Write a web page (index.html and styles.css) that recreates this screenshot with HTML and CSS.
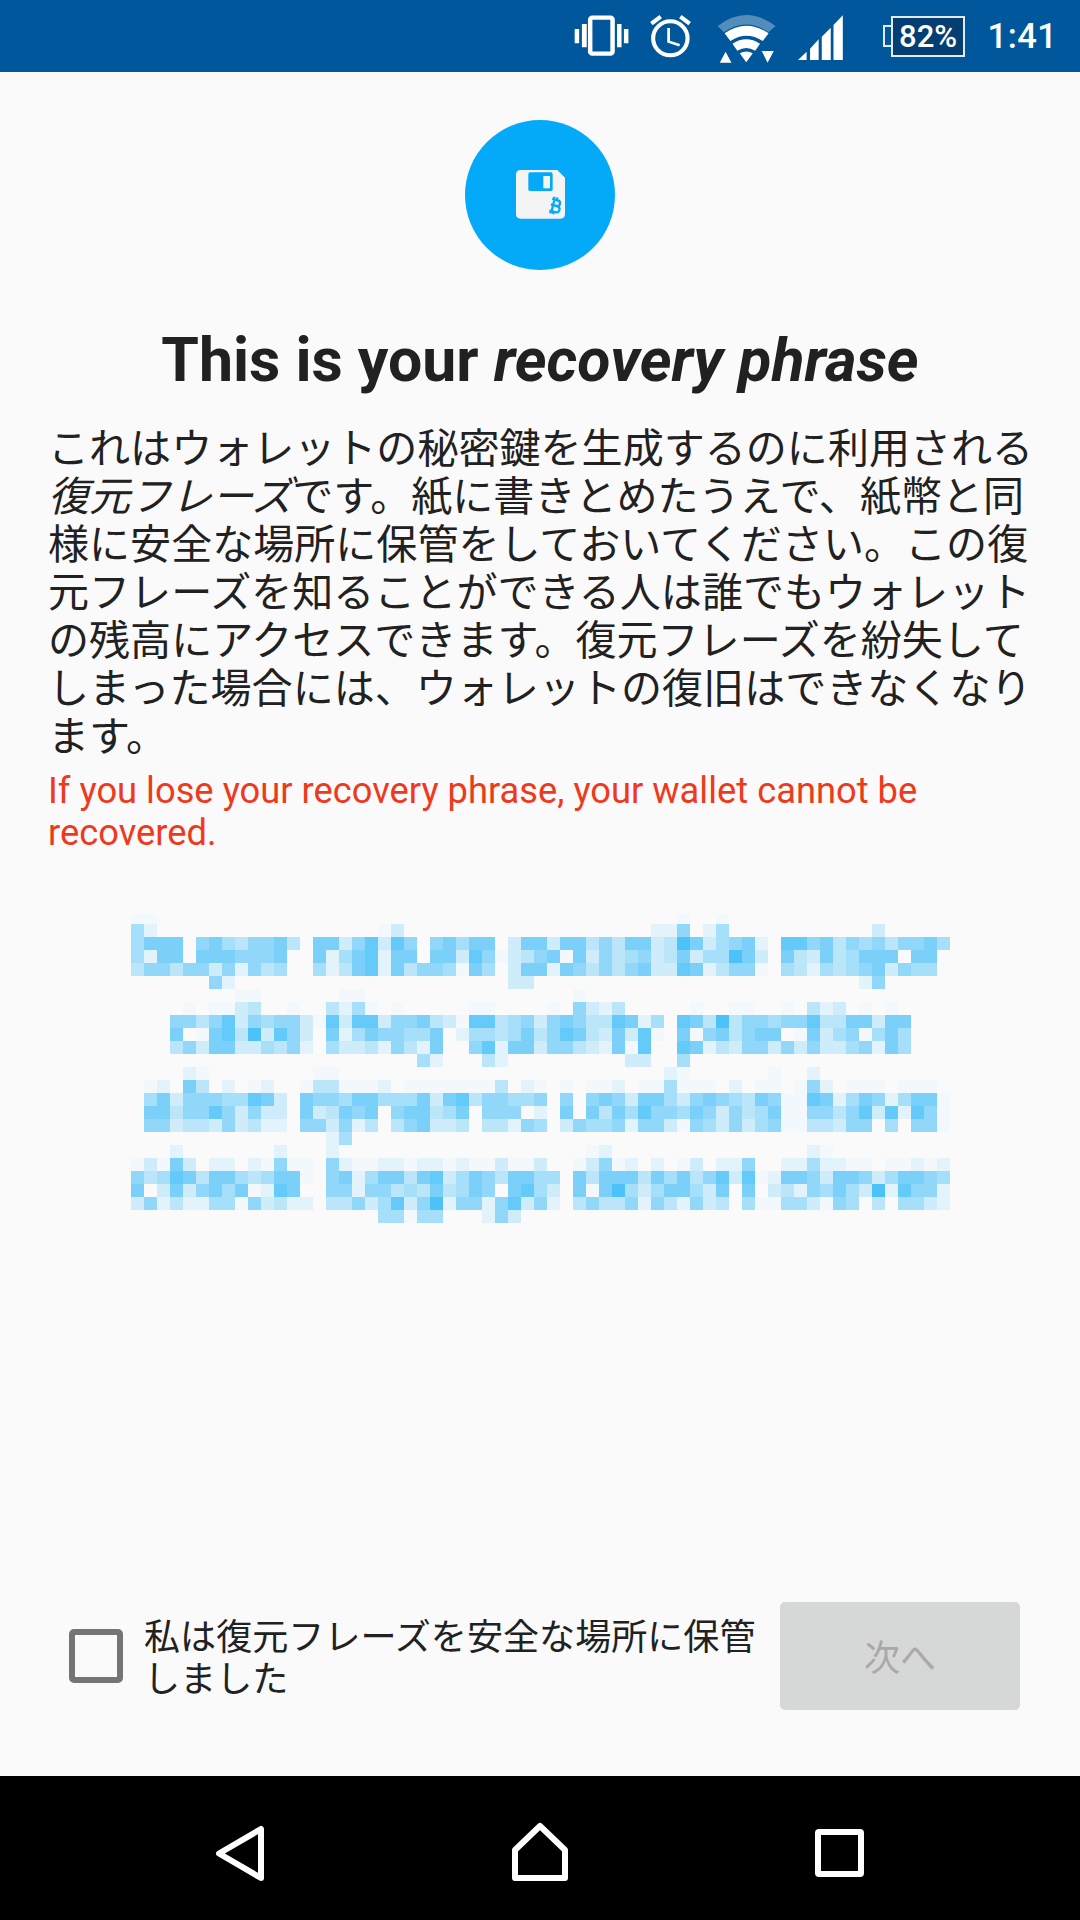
FILE: index.html
```html
<!DOCTYPE html>
<html lang="ja">
<head>
<meta charset="utf-8">
<title>Recovery phrase</title>
<link rel="stylesheet" href="styles.css">
</head>
<body>
<div class="screen">
  <header class="status">
    <svg class="ic-vibrate" viewBox="100 0 160 216" preserveAspectRatio="none"><path class="w" d="M102 87h13v43h-13zM123 72h14v70h-14zM225 72h13v70h-13zM245 87h13v43h-13z"/><rect class="outline" x="147" y="53" width="65" height="108" rx="6" stroke-width="13"/></svg>
    <svg class="ic-alarm" viewBox="316 0 126 216" preserveAspectRatio="none"><ellipse class="outline" cx="378" cy="115" rx="50" ry="51" stroke-width="12"/><path class="outline" stroke-width="12" d="M323 71 350 50M434 71 407 50"/><path class="outline" stroke-width="8" d="M373 84V125L405 136"/></svg>
    <svg class="ic-wifi" viewBox="515 0 170 216" preserveAspectRatio="none"><path class="w faded" d="M517 78Q600 12 685 78L665 97Q600 50 535 97Z"/><path class="w" d="M537 100Q600 55 665 100L648 123Q600 92 554 123ZM560 131Q600 105 640 131L626 152Q600 136 574 152ZM581 160Q600 149 619 160L600 187ZM523 188H557L540 155ZM645 153H680L662 188Z"/></svg>
    <svg class="ic-signal" viewBox="750 0 130 216" preserveAspectRatio="none"><path class="w" d="M750 180 775 155V180ZM785 146 810 118V180H785ZM819 110 845 83V180H819ZM853 75 880 46V180H853Z"/></svg>
    <div class="battery"><span class="batt-cap"></span><span class="batt-body">82%</span></div>
    <span class="clock">1:41</span>
  </header>

  <main class="content">
    <svg class="badge" viewBox="75 60 450 450">
      <circle class="badge-bg" cx="300" cy="285" r="225"/>
      <path class="disk" d="M242 210H352L375 233V342Q375 356 361 356H242Q228 356 228 342V224Q228 210 242 210Z"/>
      <rect class="badge-bg" x="265" y="217" width="73" height="56" rx="5"/>
      <rect class="disk" x="310" y="228" width="20" height="37"/>
      <g transform="rotate(14 343 317)">
        <path class="coin" d="M332 299H348Q358 299 358 308T348 316H332M348 316Q361 316 361 326T348 335H332M339 299V335M337 291V299M346 291V299M337 335V343M346 335V343"/>
      </g>
    </svg>

    <h1 class="title">This is your <em>recovery phrase</em></h1>

    <p class="intro">これはウォレットの秘密鍵を生成するのに利用される<br><em>復元フレーズ</em>です。紙に書きとめたうえで、紙幣と同<br>様に安全な場所に保管をしておいてください。この復<br>元フレーズを知ることができる人は誰でもウォレット<br>の残高にアクセスできます。復元フレーズを紛失して<br>しまった場合には、ウォレットの復旧はできなくなり<br>ます。</p>
    <p class="warning">If you lose your recovery phrase, your wallet cannot be recovered.</p>

    <div class="mosaic" id="mosaic"></div>

    <footer class="confirm">
      <span class="checkbox"></span>
      <span class="confirm-text">私は復元フレーズを安全な場所に保管しました</span>
      <span class="next">次へ</span>
    </footer>
  </main>

  <nav class="nav">
    <svg class="nav-back" viewBox="214 1822 52 62"><path d="M261 1829V1878L219 1853.5Z"/></svg>
    <svg class="nav-home" viewBox="511 1822 58 62"><path d="M515 1878H565V1850L540 1826 515 1850Z"/></svg>
    <svg class="nav-recent" viewBox="815 1822 52 62"><rect x="819" y="1832" width="43" height="42" rx="1"/></svg>
  </nav>
</div>
<script src="mosaic.js"></script>
</body>
</html>
```
FILE: styles.css
```css
* { box-sizing: border-box; }
html, body { margin: 0; padding: 0; }
body { width: 1080px; height: 1920px; overflow: hidden; font-family: Roboto, "Noto Sans CJK JP", sans-serif; background: #fafafa; }
.screen { display: flex; flex-direction: column; width: 1080px; height: 1920px; }

.status { flex: 0 0 72px; height: 72px; background: #01579b; display: flex; align-items: center; color: #fff; padding-left: 574.4px; }
.status svg { display: block; height: 72px; flex: none; }
.w { fill: #fff; }
.faded { fill-opacity: .32; }
.outline { fill: none; stroke: #fff; }
.ic-vibrate { width: 55.1px; }
.ic-alarm { width: 43.4px; margin-left: 19.3px; }
.ic-wifi { width: 58.5px; margin-left: 25.2px; }
.ic-signal { width: 44.8px; margin-left: 22.4px; }
.battery { display: flex; align-items: center; margin-left: 40.3px; height: 41px; }
.batt-cap { display: block; width: 8px; height: 22px; border: 2px solid #e3eaf1; border-right: 0; }
.batt-body { display: flex; align-items: center; justify-content: center; width: 73.5px; height: 41px; background: #043e73; border: 2px solid #e3eaf1; font: 500 31px/1 Roboto, sans-serif; }
.clock { margin-left: 22.7px; font: 500 34.5px/1 Roboto, sans-serif; letter-spacing: .5px; }

.content { flex: 1 1 auto; display: flex; flex-direction: column; padding: 48px 48px 66px; min-height: 0; }
.badge { display: block; flex: none; width: 150px; height: 150px; margin: 0 auto; }
.badge-bg { fill: #04a9f8; }
.disk { fill: #f4f4f4; }
.coin { fill: none; stroke: #04a9f8; stroke-width: 7; }
.title { margin: 55px 0 0; font: 700 60.8px/72px Roboto, sans-serif; color: #212121; text-align: center; white-space: nowrap; }
.title em { font-style: italic; }
.intro { margin: 24px 0 0; font: 400 41.05px/48px "Noto Sans CJK JP", sans-serif; color: #212121; white-space: nowrap; }
.intro em { font-style: italic; }
.warning { margin: 13px 0 0; font: 400 36.3px/42px Roboto, "Noto Sans CJK JP", sans-serif; color: #ee3a1c; }

.mosaic { display: grid; grid-template-columns: repeat(63, 13px); grid-template-rows: 10px repeat(23, 13px); width: 819px; margin: 60px auto 0; flex: none; }
.m0 { background: transparent; }
.m1 { background: #f2f8fc; }
.m2 { background: #e3f3fb; }
.m3 { background: #cfecfa; }
.m4 { background: #bbe5f9; }
.m5 { background: #a6dff9; }
.m6 { background: #90d7f9; }
.m7 { background: #7bd0f9; }
.m8 { background: #63caf9; }
.m9 { background: #4cc2f8; }

.confirm { margin-top: auto; display: flex; align-items: center; padding-left: 21px; margin-right: 12px; }
.checkbox { flex: none; width: 54px; height: 54px; border: 6px solid #757575; border-radius: 5px; }
.confirm-text { flex: none; width: 616px; margin-left: 21px; padding-bottom: 3px; font: 400 36.1px/42px "Noto Sans CJK JP", sans-serif; color: #212121; }
.next { flex: none; display: flex; align-items: center; justify-content: center; width: 240px; height: 108px; margin-left: auto; padding-bottom: 3px; background: #d6d7d7; border-radius: 5px; font: 400 36px/1 "Noto Sans CJK JP", sans-serif; color: #a9a9a9; }

.nav { flex: 0 0 144px; height: 144px; background: #000; display: flex; justify-content: center; align-items: flex-start; gap: 245px; padding-top: 46px; }
.nav svg { display: block; height: 62px; flex: none; }
.nav path, .nav rect { fill: none; stroke: #fff; stroke-width: 6; stroke-linejoin: round; }
.nav-back { width: 52px; }
.nav-home { width: 58px; }
.nav-recent { width: 52px; }
```
FILE: mosaic.js
```js
var rows = [
  "11000000000000000000000000000000"+"0000000000100100000000000000000",
  "52000000000000000001300000000000"+"0000000022602500000000000300000",
  "57770675466740773683860675770377"+"3774647734973567208867465646675",
  "52770777666700725782770773861346"+"7173645634735597307437457770770",
  "46646636264500524782746651750377"+"2764646733872466105425456736550",
  "00000062000000000000000000000330"+"0000000000000000000000002600000",
  "00000000110000001100000000000000"+"0010000000000000000000000000000",
  "00001011340010042510100000110000"+"1063240000010011001042301010000",
  "00066468365663183883667431884563"+"6764487250874946656684477377000",
  "00070178493863072576655702554574"+"6874373810716746770173561575000",
  "00046377335462053342642700682773"+"6643271800872436636363356275000",
  "00000000000000000000005200042000"+"0000003300500000000000000000000",
  "00002100000000110000000000000000"+"0000000002100000010020000000000",
  "01207402012001441112011111114021"+"0101120115111020110162011101110",
  "05736665587307665775557378466556"+"0606763775367654761187257625771",
  "07746686363307347670677457066602"+"0707475866576364571166468382861",
  "06634436342206636240467334044265"+"0365562663165363561144366050661",
  "00000000000000025000000000000000"+"0000000000000000000000000000000",
  "00020000000200020000000000000000"+"0001200000000000000021000000000",
  "13173022021611062112212212113113"+"0013612020130226002252211011212",
  "64587477545771067257747835764775"+"5074777475746838127763776357765",
  "70373675712870066266454745760785"+"3071795357753707034265753928662",
  "36242255163422044635836926626836"+"2046446264263405115531650405532",
  "00000000000000000005515500026300"+"0000000000000000000000000000000"
];
var host = document.getElementById("mosaic");
rows.forEach(function (row) {
  row.split("").forEach(function (level) {
    var cell = document.createElement("span");
    cell.className = "m" + level;
    host.appendChild(cell);
  });
});
```
